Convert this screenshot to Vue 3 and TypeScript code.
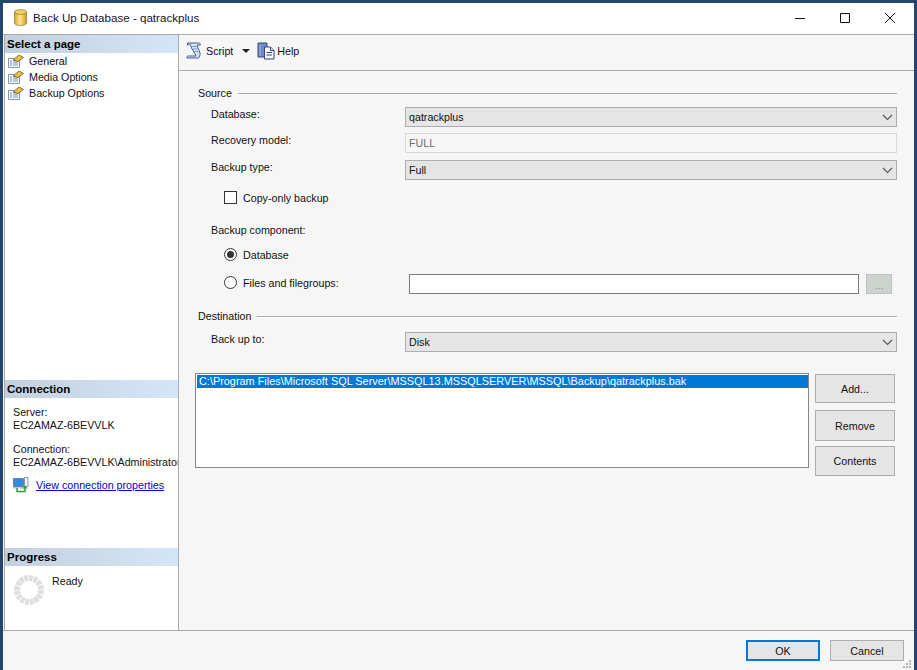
<template>
  <div class="window">
    <header class="titlebar">
      <svg class="db-icon" width="13" height="17" viewBox="0 0 13 17">
        <defs>
          <linearGradient id="gold" x1="0" x2="1" y1="0" y2="0">
            <stop offset="0" stop-color="#d9a72a" />
            <stop offset="0.45" stop-color="#fbe98c" />
            <stop offset="1" stop-color="#d39a1c" />
          </linearGradient>
        </defs>
        <path d="M.5 3v11c0 1.400 2.700 2.500 6 2.500s6-1.100 6-2.500V3z" fill="url(#gold)" stroke="#8d7330" stroke-width="0.7" />
        <ellipse cx="6.500" cy="3" rx="6" ry="2.400" fill="#f3d35c" stroke="#8d7330" stroke-width="0.7" />
      </svg>
      <span class="title">Back Up Database - qatrackplus</span>
      <div class="controls">
        <svg width="12" height="12" viewBox="0 0 12 12"><path d="M1 6.500h10" stroke="#111" fill="none" /></svg>
        <svg width="12" height="12" viewBox="0 0 12 12"><path d="M1.500 1.500h9v9h-9z" stroke="#111" fill="none" /></svg>
        <svg width="12" height="12" viewBox="0 0 12 12"><path d="M1 1l10 10M11 1L1 11" stroke="#111" fill="none" /></svg>
      </div>
    </header>

    <div class="body">
      <aside class="sidebar">
        <div class="side-head">Select a page</div>
        <ul class="pages">
          <li v-for="page in pages" :key="page">
            <svg width="16" height="14" viewBox="0 0 16 14">
              <path d="M.5 4.500h11v9H.5z" fill="#f4f7fb" stroke="#8496ac" />
              <path d="M2 7h2M5 7h5M2 9h2M5 9h5M2 11h2M5 11h5" stroke="#6f93c2" />
              <path d="M5 6l6-5 4.500 2.500L10 7.500z" fill="#eebf3e" stroke="#5e5a3a" stroke-width="0.8" />
            </svg>
            <span class="page-name">{{ page }}</span>
          </li>
        </ul>

        <div class="side-head conn-head">Connection</div>
        <div class="conn">
          <p>Server:<br />EC2AMAZ-6BEVVLK</p>
          <p>Connection:<br />EC2AMAZ-6BEVVLK\Administrator</p>
          <div class="conn-link">
            <svg width="16" height="16" viewBox="0 0 16 16">
              <path d="M.5 1.500h10v8H.5z" fill="#2f8be6" stroke="#6f8096" />
              <path d="M11.500 .5h3.500v9h-3.500z" fill="#eef1f6" stroke="#8a97a8" />
              <path d="M0 10h11v1.500H0z" fill="#b9c1cb" />
              <path d="M4 11v3.500h8V11" fill="none" stroke="#2f9a2f" stroke-width="1.500" />
              <path d="M9.500 11.500l2.500-3 2.500 3z" fill="#2f9a2f" />
            </svg>
            <a href="#">View connection properties</a>
          </div>
        </div>

        <div class="side-head progress-head">Progress</div>
        <div class="progress">
          <svg width="30" height="30" viewBox="0 0 30 30">
            <circle cx="15" cy="15" r="12" fill="none" stroke="#dedede" stroke-width="6" pathLength="16" stroke-dasharray="0.82 0.18" />
          </svg>
          <span>Ready</span>
        </div>
      </aside>

      <main class="main">
        <div class="toolbar">
          <svg width="18" height="17" viewBox="0 0 18 17">
            <path d="M1.500 1h11c1.500 0 2 1 2 2h-3c-.5 2 2 5 2.500 8 .3 2-.3 3.500-1.500 5H1c-.5-1 0-2 1.500-2h7.500C9.500 11 5 7 4.500 3 4.300 2 3 2.500 1.500 3z" fill="#d6e2f2" stroke="#3f5f90" />
            <path d="M6 4.500h5M7 7h5M8.500 9.500h4" stroke="#7f9cc8" />
          </svg>
          <span class="tool-label">Script</span>
          <span class="caret"></span>
          <svg width="18" height="18" viewBox="0 0 18 18">
            <path d="M1 1h9v14H1z" fill="#7088c4" stroke="#33477c" />
            <path d="M3 2.500v11" stroke="#a8b8e2" />
            <path d="M7.500 5h6l3.500 3.500V17h-9.500z" fill="#f7f8fc" stroke="#33477c" />
            <path d="M13.500 5v3.500H17" fill="#cdd6ea" stroke="#33477c" />
            <path d="M9.500 10.500h5.500M9.500 13h5.500" stroke="#33477c" />
          </svg>
          <span class="tool-label">Help</span>
        </div>

        <div class="form">
          <div class="legend first"><span>Source</span><i></i></div>

          <div class="row database-row">
            <label>Database:</label>
            <div class="select">
              <span>qatrackplus</span>
              <svg width="11" height="7" viewBox="0 0 11 7"><path d="M1 1l4.500 4.500L10 1" fill="none" stroke="#555" stroke-width="1.100" /></svg>
            </div>
          </div>
          <div class="row recovery-row">
            <label>Recovery model:</label>
            <div class="readonly">FULL</div>
          </div>
          <div class="row type-row">
            <label>Backup type:</label>
            <div class="select">
              <span>Full</span>
              <svg width="11" height="7" viewBox="0 0 11 7"><path d="M1 1l4.500 4.500L10 1" fill="none" stroke="#555" stroke-width="1.100" /></svg>
            </div>
          </div>

          <div class="option copy-row">
            <span class="checkbox"></span>
            <span>Copy-only backup</span>
          </div>

          <div class="component-label">Backup component:</div>
          <div class="option database-option">
            <span class="radio checked"></span>
            <span>Database</span>
          </div>
          <div class="option files-option">
            <span class="radio"></span>
            <span class="files-label">Files and filegroups:</span>
            <div class="files-input"></div>
            <div class="dots">...</div>
          </div>

          <div class="legend destination"><span>Destination</span><i></i></div>
          <div class="row backup-row">
            <label>Back up to:</label>
            <div class="select">
              <span>Disk</span>
              <svg width="11" height="7" viewBox="0 0 11 7"><path d="M1 1l4.500 4.500L10 1" fill="none" stroke="#555" stroke-width="1.100" /></svg>
            </div>
          </div>

          <div class="targets">
            <div class="listbox">
              <div class="selected">C:\Program Files\Microsoft SQL Server\MSSQL13.MSSQLSERVER\MSSQL\Backup\qatrackplus.bak</div>
            </div>
            <div class="side-buttons">
              <button class="btn add">Add...</button>
              <button class="btn remove">Remove</button>
              <button class="btn contents">Contents</button>
            </div>
          </div>
        </div>
      </main>
    </div>

    <footer class="footer">
      <button class="btn ok">OK</button>
      <button class="btn cancel">Cancel</button>
      <svg class="grip" width="9" height="9" viewBox="0 0 9 9">
        <path d="M6 0h2v2H6zM3 3h2v2H3zM6 3h2v2H6zM0 6h2v2H0zM3 6h2v2H3zM6 6h2v2H6z" fill="#b5b5b5" />
      </svg>
    </footer>
  </div>
</template>

<script setup lang="ts">
// 左侧页面列表
const pages: string[] = ['General', 'Media Options', 'Backup Options']
</script>

<style>
html,
body {
  margin: 0;
  overflow: hidden;
}
</style>

<style scoped>
.window {
  box-sizing: border-box;
  width: 917px;
  height: 670px;
  padding: 3px 3px 0 3px;
  background: #24456e;
  display: flex;
  flex-direction: column;
  font-family: 'Liberation Sans', Arial, sans-serif;
  font-size: 10.7px;
  color: #111;
}

.titlebar {
  height: 32px;
  flex: none;
  background: #fff;
  display: flex;
  align-items: center;
  padding: 0 0 2px 11px;
  box-sizing: border-box;
  border-bottom: 1px solid #a9a9a9;
}

.title {
  margin-left: 6px;
  font-size: 11.6px;
  color: #1a1030;
}

.controls {
  margin-left: auto;
  margin-right: 18px;
  display: flex;
  gap: 33px;
}

.body {
  flex: 1;
  display: flex;
  min-height: 0;
  background: #f6f6f6;
}

.sidebar {
  width: 175px;
  flex: none;
  box-sizing: border-box;
  margin-left: 1px;
  background: #fff;
  border-left: 1px solid #a9a9a9;
  border-right: 1px solid #a9a9a9;
  display: flex;
  flex-direction: column;
  overflow: hidden;
}

.side-head {
  height: 18px;
  line-height: 18px;
  padding-left: 2px;
  font-weight: bold;
  font-size: 11.5px;
  color: #000;
  background: linear-gradient(90deg, #c3d0de, #d3e6f8);
}

.pages {
  list-style: none;
  margin: 0;
  padding: 0;
}

.pages li {
  height: 16px;
  display: flex;
  align-items: center;
  padding-left: 3px;
  gap: 5px;
}

.pages li:first-child .page-name {
  background: #f8f8f8;
  padding: 1px 2px;
  margin-left: -2px;
}

.conn-head {
  margin-top: 279px;
}

.conn {
  padding: 8px 0 0 8px;
  white-space: nowrap;
  line-height: 13px;
}

.conn p {
  margin: 0 0 11px;
}

.conn-link {
  margin-top: -3px;
  display: flex;
  align-items: center;
  gap: 7px;
}

.conn-link a {
  color: #0000e0;
}

.progress-head {
  margin-top: 55px;
}

.progress {
  display: flex;
  align-items: flex-start;
  padding: 9px 0 0 9px;
  gap: 8px;
}

.progress span {
  line-height: 12px;
}

.main {
  flex: 1;
  min-width: 0;
}

.toolbar {
  height: 36px;
  box-sizing: border-box;
  border-bottom: 1px solid #a9a9a9;
  display: flex;
  align-items: center;
  padding: 0 0 4px 7px;
}

.tool-label {
  margin-left: 2px;
}

.caret {
  margin: 0 7px 0 9px;
  border-left: 4px solid transparent;
  border-right: 4px solid transparent;
  border-top: 4px solid #222;
}

.form {
  padding: 0 17px 0 19px;
}

.legend {
  display: flex;
  align-items: center;
  height: 14px;
  gap: 6px;
}

.legend i {
  flex: 1;
  height: 1px;
  background: #a9a9a9;
  box-shadow: 0 1px 0 #fff;
}

.first {
  margin-top: 15px;
}

.row {
  display: flex;
  padding-left: 13px;
}

.row label {
  width: 194px;
  flex: none;
  line-height: 14px;
}

.database-row {
  margin-top: 7px;
}

.recovery-row {
  margin-top: 6px;
}

.type-row {
  margin-top: 7px;
}

.select,
.readonly {
  flex: 1;
  height: 20px;
  box-sizing: border-box;
  border: 1px solid #adadad;
  background: #e5e5e5;
  display: flex;
  align-items: center;
  justify-content: space-between;
  padding: 0 3px 0 3px;
}

.readonly {
  background: #f6f6f6;
  border-color: #d9d9d9;
  color: #6d6d6d;
}

.option {
  display: flex;
  align-items: center;
  padding-left: 26px;
}

.checkbox {
  width: 13px;
  height: 13px;
  box-sizing: border-box;
  border: 1px solid #333;
  background: #fff;
  margin-right: 6px;
}

.radio {
  width: 13px;
  height: 13px;
  box-sizing: border-box;
  border: 1px solid #333;
  border-radius: 50%;
  background: #fff;
  margin-right: 6px;
  position: relative;
}

.radio.checked::after {
  content: '';
  position: absolute;
  inset: 2px;
  border-radius: 50%;
  background: #333;
}

.copy-row {
  margin-top: 11px;
}

.component-label {
  margin-top: 19px;
  padding-left: 13px;
  line-height: 14px;
}

.database-option {
  margin-top: 11px;
}

.files-option {
  margin-top: 13px;
  height: 20px;
}

.files-option .radio {
  margin-bottom: 3px;
}

.files-label {
  width: 166px;
  flex: none;
  margin-bottom: 3px;
}

.files-input {
  width: 450px;
  height: 20px;
  box-sizing: border-box;
  border: 1px solid #7a7a7a;
  background: #fff;
}

.dots {
  margin-left: 7px;
  width: 26px;
  height: 20px;
  box-sizing: border-box;
  border: 1px solid #b9c2bd;
  background: #ccd3cf;
  color: #8a908c;
  text-align: center;
  line-height: 20px;
}

.destination {
  margin-top: 15px;
}

.backup-row {
  margin-top: 9px;
}

.targets {
  margin-top: 21px;
  margin-left: -3px;
  display: flex;
  gap: 6px;
}

.listbox {
  width: 614px;
  height: 95px;
  box-sizing: border-box;
  border: 1px solid #828790;
  background: #fff;
  padding: 1px;
}

.selected {
  height: 13px;
  line-height: 13px;
  padding-left: 2px;
  width: 609px;
  font-size: 10.9px;
  background: #0078d7;
  color: #fff;
  white-space: nowrap;
  overflow: hidden;
}

.side-buttons {
  display: flex;
  flex-direction: column;
  margin-top: 1px;
}

.btn {
  box-sizing: border-box;
  border: 1px solid #adadad;
  background: #e5e5e5;
  font: inherit;
  color: #111;
  padding: 0;
}

.add {
  width: 80px;
  height: 29px;
}

.remove {
  width: 80px;
  height: 31px;
  margin-top: 7px;
}

.contents {
  width: 80px;
  height: 30px;
  margin-top: 5px;
}

.footer {
  height: 40px;
  flex: none;
  box-sizing: border-box;
  border-top: 1px solid #a9a9a9;
  background: #f6f6f6;
  display: flex;
  justify-content: flex-end;
  align-items: flex-start;
  padding: 9px 10px 0 0;
  gap: 10px;
  position: relative;
}

.ok {
  width: 74px;
  height: 21px;
  border: 2px solid #0078d7;
}

.cancel {
  width: 74px;
  height: 21px;
}

/* 右下角拖拽手柄 */
.grip {
  position: absolute;
  right: 2px;
  bottom: 1px;
}
</style>
